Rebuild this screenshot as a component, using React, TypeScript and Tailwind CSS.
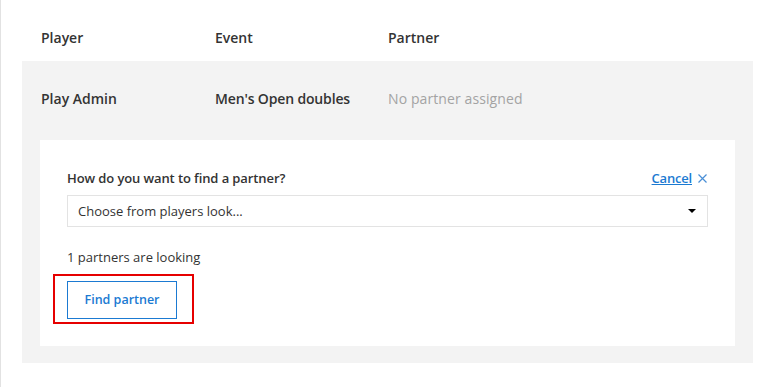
import React from 'react';

type Entry = {
  player: string;
  event: string;
  partner: string | null;
};

const entry: Entry = {
  player: 'Play Admin',
  event: "Men's Open doubles",
  partner: null,
};

const CaretDown: React.FC = () => (
  <svg className="w-[8px] h-[4px]" viewBox="0 0 8 4" fill="currentColor">
    <path d="M0 0h8L4 4z" />
  </svg>
);

const CloseIcon: React.FC = () => (
  <svg className="w-[9px] h-[9px]" viewBox="0 0 9 9" fill="none" stroke="currentColor" strokeWidth={1.2}>
    <path d="M0.5 0.5l8 8M8.5 0.5l-8 8" />
  </svg>
);

export default function App() {
  return (
    <div
      className="w-[781px] h-[387px] bg-white border-l border-[#e2e2e2] overflow-hidden text-[#333] text-[14px] leading-5"
      style={{ fontFamily: '"Open Sans", "Noto Sans", Arial, sans-serif' }}
    >
      <div className="ml-[21px] w-[731px]">
        {/* header */}
        <div className="grid grid-cols-[174px_173px_1fr] px-[19px] pt-[28px] h-[61px] font-semibold">
          <div>Player</div>
          <div>Event</div>
          <div>Partner</div>
        </div>

        {/* entry row */}
        <div className="bg-[#f3f3f3] pb-[17px]">
          <div className="grid grid-cols-[174px_173px_1fr] px-[19px] pt-[28px]">
            <div className="font-semibold">{entry.player}</div>
            <div className="font-semibold tracking-[-0.15px]">{entry.event}</div>
            <div className="text-[#a3a3a3] tracking-[0.1px]">{entry.partner ?? 'No partner assigned'}</div>
          </div>

          <div className="mx-[18px] mt-[31px] bg-white px-[27px] pt-[28px] pb-[27px]">
            <div className="flex items-center justify-between text-[13px]">
              <span className="font-semibold tracking-[-0.1px]">How do you want to find a partner?</span>
              <span className="flex items-center gap-[6px] pr-[1px]">
                <a href="#" className="text-[#1b7ad2] underline font-semibold tracking-[-0.2px]">
                  Cancel
                </a>
                <span className="text-[#4a8fd6]">
                  <CloseIcon />
                </span>
              </span>
            </div>

            <div className="mt-[7px] h-[32px] border border-[#e3e3e3] flex items-center justify-between pl-[10px] pr-[11px] text-[13px]">
              <span>Choose from players look...</span>
              <span className="text-black">
                <CaretDown />
              </span>
            </div>

            <div className="mt-[20px] text-[13px]">1 partners are looking</div>

            <div className="relative mt-[14px] w-[110px]">
              <button className="w-[110px] h-[38px] border border-[#1b7ad2] text-[#1b7ad2] text-[12.5px] font-semibold bg-white">
                Find partner
              </button>
              <div className="absolute -left-[14px] -top-[7px] w-[141px] h-[50px] border-2 border-[#e60000] pointer-events-none" />
            </div>
          </div>
        </div>
      </div>
    </div>
  );
}
